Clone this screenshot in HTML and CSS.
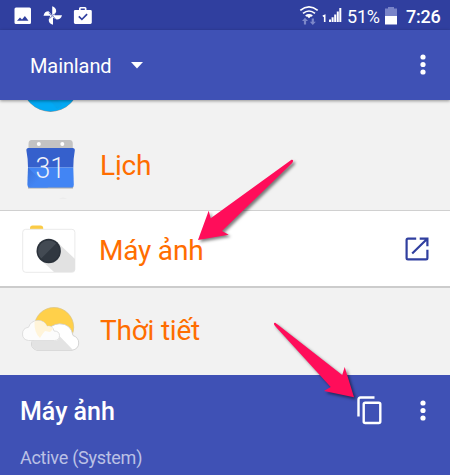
FILE: index.html
```html
<!DOCTYPE html>
<html lang="vi">
<head>
<meta charset="utf-8">
<title>Mainland</title>
<link rel="stylesheet" href="styles.css">
</head>
<body>
<main class="phone">
  <header class="status">
    <svg class="status-left" width="100" height="30" viewBox="0 0 100 30" fill="#fff">
      <path fill-rule="evenodd" d="M16 7.500h13.500q1.500 0 1.500 1.500v13.500q0 1.500-1.500 1.500H16q-1.500 0-1.500-1.500V9q0-1.500 1.500-1.500zM17 20.800h11.500l-3.600-4.800-2.900 3.500-2-2z"/>
      <path d="M52.200 15.200V6.300q4 1.200 4 5.100l-1.700 3.800h7.500q-1.200 4.300-5.200 4.300l-3.800-1.800v7.100q-4.300-1.100-4.300-5l1.700-4.100h-6.900q1-4.400 5-4.400z"/>
      <path d="M52.200 15.500l3.600-2M52.800 16l2.500 2.800M52.200 15.500l-3.500-2.500M52.200 16l-2.400 2.500" stroke="#303f9f" stroke-width=".7"/>
      <path fill-rule="evenodd" d="M79 10V8.500Q79 7 80.500 7H85q1.500 0 1.500 1.500V10h4q1.300 0 1.300 1.300v11.300q0 1.400-1.400 1.400H75.300q-1.400 0-1.400-1.400V11.300q0-1.300 1.300-1.300zm1.700 0h4.100V8.600h-4.100zM78.200 17l3.700 3.600 5.800-5.900-1.200-1.100-4.600 4.600-2.500-2.400z"/>
    </svg>
    <svg class="signal" width="46" height="30" viewBox="298 0 46 30">
      <g fill="none" stroke="#fff" stroke-width="1.700">
        <path d="M300.300 10.400q8.700-7 17.400 0M303 13.300q6-4.600 12 0M305.700 16q3.300-2.400 6.600 0"/>
      </g>
      <path d="M309 18.300l-2.300-2.200q2.300-1.500 4.600 0z" fill="#fff"/>
      <g fill="#7c87c9"><path d="M305 17.800l3 3.300h-1.900v3.500h-2.200v-3.500H302zM312.800 25l-3-3.300h1.900v-3.200h2.200v3.200h1.900z"/></g>
      <path d="M322.800 16.300l1.900-.8V22" fill="none" stroke="#fff" stroke-width="1.600"/>
      <path d="M330 22v-2.500M332.600 22v-4.800M335.200 22v-7.600M337.800 22V11.500M340.300 22V8" fill="none" stroke="#fff" stroke-width="2"/>
    </svg>
    <span class="percent">51%</span>
    <svg class="battery" width="12" height="18" viewBox="0 0 12 18">
      <path d="M3 0h6v1.500h3V9H0V1.500h3z" fill="#7984c8"/><path d="M0 9h12v8.500H0z" fill="#fff"/>
    </svg>
    <span class="clock">7:26</span>
  </header>
  <nav class="toolbar">
    <span class="place">Mainland</span>
    <svg class="caret" width="12" height="7" viewBox="0 0 12 7"><path d="M0 0h12L6 6.500z" fill="#fff"/></svg>
    <svg class="more" width="6" height="22" viewBox="0 0 6 22" fill="#fff"><circle cx="3" cy="3" r="2.600"/><circle cx="3" cy="10.500" r="2.600"/><circle cx="3" cy="18" r="2.600"/></svg>
  </nav>
  <section class="row first">
    <svg class="app" width="100" height="110" viewBox="0 100 100 110">
      <defs>
        <linearGradient id="fold" x1="0" y1="0" x2="1" y2="1"><stop offset="0" stop-color="#3b70d8"/><stop offset=".6" stop-color="#4285f4"/></linearGradient>
        <filter id="soft"><feGaussianBlur stdDeviation=".6"/></filter>
      </defs>
      <circle cx="50.500" cy="84" r="28" fill="#999" filter="url(#soft)"/>
      <circle cx="50.500" cy="83.500" r="28" fill="#03a9f4"/>
      <path d="M50 100h7l5 5-5 4z" fill="#0b9fe6" opacity=".5"/>
      <path d="M28 187l-.3-1h45.600L73 188.500H28z" fill="#aaa" filter="url(#soft)"/>
      <path d="M28.500 150v-6q0-4 3-4h38.300q3 0 3 4v6z" fill="#c3c3c3"/>
      <circle cx="38.800" cy="144" r="2" fill="#fff"/><circle cx="62.300" cy="144" r="2" fill="#fff"/>
      <path d="M28.500 148h44q2.600 0 2.300 2.500-1.500 8-1.500 17H28q0-9-1.600-17-.3-2.500 2.100-2.500z" fill="#3560cc"/>
      <path d="M28 167.500h45.300l.5 17.500q0 2.500-2.200 2.500H29.900q-2.300 0-2.300-2.500z" fill="#4285f4"/>
      <path d="M28 167.500l20 20H29.900q-2.300 0-2.300-2.500z" fill="url(#fold)"/>
      <text class="day" x="35.500" y="178" textLength="29.500" lengthAdjust="spacingAndGlyphs">31</text>
      <path d="M59 198.500q4-1.500 8 0z" fill="#e5e5e5"/>
    </svg>
    <span class="name">Lịch</span>
  </section>
  <section class="row active">
    <svg class="app" width="100" height="76" viewBox="0 211 100 76">
      <path d="M30 230v-2q0-2.500 2.500-2.500h8q2.700 0 2.700 2.500v2z" fill="#fbcb45"/>
      <rect x="22.700" y="229.300" width="52.200" height="43" rx="3" fill="#fff" stroke="#eaeaea"/>
      <path d="M57 242l18 17v10q0 3-3 3H54l-14-13z" fill="#e2e2e2"/>
      <circle cx="48.700" cy="251" r="12.200" fill="#2b323b"/>
      <circle cx="48.700" cy="251" r="10.600" fill="#303740"/>
      <path d="M41.200 258.500a10.600 10.600 0 0 1 15-15z" fill="#434a53"/>
    </svg>
    <span class="name camera">Máy ảnh</span>
    <svg class="open" width="24" height="24" viewBox="0 0 24 24" fill="none" stroke="#303f9f" stroke-width="2.200">
      <path d="M11.200 1.700H3q-1.400 0-1.400 1.400v17.800q0 1.400 1.400 1.400h18q1.400 0 1.400-1.400v-8.200M7.200 16.500L21.500 2.500M14.700 1.700h7.700v7.500"/>
    </svg>
  </section>
  <section class="row last">
    <svg class="app" width="100" height="87" viewBox="0 288 100 87">
      <circle cx="54" cy="327.200" r="19.700" fill="#ffd04a" stroke="#d8c388" stroke-width=".7"/>
      <path d="M37 350.300q-5.500-1.500-5.500-6.300 0-5 6-5l9-7q4-7.500 13-8.200 11.500 0 13.500 11.700 5.700 2 5.700 7.500 0 6-6.700 7.300z" fill="#fff" stroke="#ccc" stroke-width=".8"/>
      <path d="M32 341h24q3.500-1 3.500-5l13.500 14H37q-4-.5-5-4z" fill="#e3e3e3"/>
      <path d="M28.500 340.500q-6-.8-6-6.500 0-6 6-6.700 2.500-6.800 9.500-6.800 6.500 0 9 5.800 6-.8 7 4.700 5.500 0 5.500 4.700t-5 4.800z" fill="#fcfcfc" stroke="#d8d8d8" stroke-width=".8"/>
      <path d="M34.500 321.500q9-1.800 12.500 5 4.500-.8 6 2.500l-3 3-5-1q-2 2-5 7-6-5-5.500-16.500z" fill="#fff4d9"/>
    </svg>
    <span class="name">Thời tiết</span>
  </section>
  <footer class="sheet">
    <div class="sheet-text">
      <h1 class="title">Máy ảnh</h1>
      <p class="state">Active (System)</p>
    </div>
    <svg class="copy" width="25" height="29" viewBox="0 0 25 29" fill="none" stroke="#fff" stroke-width="2.400">
      <path d="M1.500 20.500V3.500q0-2 2-2H17.500"/><rect x="6.700" y="6.700" width="16.600" height="20.300" rx="1.500"/>
    </svg>
    <svg class="more" width="6" height="22" viewBox="0 0 6 22" fill="#fff"><circle cx="3" cy="3" r="2.600"/><circle cx="3" cy="10.500" r="2.600"/><circle cx="3" cy="18" r="2.600"/></svg>
  </footer>
  <svg class="arrows" width="450" height="475" viewBox="0 0 450 475" fill="#ff0d5a">
    <path d="M291.500 159.800q1.500-.3 1.700 1-.3 1.500-1.500 2.700L222 231l6.700 3.800L198 240l10.700-29.200 2 7.500z"/>
    <path d="M275.300 322.800q-1.400-.3-1.400 1.200.5 1.200 1.400 2.300L330.700 387l-6.700 4 30 6.200-9.300-30.200-2.500 8z"/>
  </svg>
</main>
</body>
</html>
```
FILE: styles.css
```css
body { margin: 0; font-family: Roboto, sans-serif; }
.phone { position: relative; width: 450px; height: 475px; overflow: hidden; background: #f2f2f2; }
.phone svg { display: block; flex: none; }
.status { display: flex; height: 30px; background: #303f9f; color: #fff; }
.signal { margin-left: 198px; }
.percent { width: 33px; margin-left: 3px; font-size: 18px; line-height: 33px; white-space: nowrap; letter-spacing: -.2px; }
.battery { margin: 7px 0 0 5px; }
.clock { margin-left: 9px; font-size: 18px; font-weight: 500; line-height: 33px; letter-spacing: -.2px; }
.toolbar { position: relative; display: flex; align-items: center; height: 70px; padding: 0 24px 0 30px; background: #3f51b5; color: #fff; box-shadow: 0 1px 3px rgba(0,0,0,.4); box-sizing: border-box; }
.place { width: 101px; font-size: 20px; line-height: 24px; padding-top: 2px; letter-spacing: -.1px; }
.more { margin-left: auto; }
.row { display: flex; box-sizing: border-box; }
.name { font-size: 28px; color: #ff6d00; white-space: nowrap; letter-spacing: -.2px; }
.first { height: 110px; }
.first .name { line-height: 131px; }
.active { height: 78px; background: #fff; border-top: 1px solid #d0d0d0; border-bottom: 2px solid #ccc; }
.active .name { line-height: 79px; }
.name.camera { margin-left: -1px; }
.open { margin: 26px 21px 0 auto; }
.last { height: 87px; }
.last .name { line-height: 85px; }
.day { font-size: 30px; font-weight: 300; fill: #eef1f9; }
.sheet { display: flex; align-items: flex-start; height: 100px; padding: 0 24px 0 20px; background: #3f51b5; color: #fff; box-sizing: border-box; }
.sheet-text { width: 338px; }
.title { margin: 22px 0 0; font-size: 25px; font-weight: 500; line-height: 30px; }
.state { margin: 20px 0 0; font-size: 18px; line-height: 22px; letter-spacing: -.27px; color: #bbc1e5; }
.copy { margin-top: 21px; margin-left: -1px; }
.sheet .more { margin-top: 25px; }
.arrows { position: absolute; left: 0; top: 0; filter: drop-shadow(2px 2px 1.5px rgba(0,0,0,.5)); pointer-events: none; }
```
